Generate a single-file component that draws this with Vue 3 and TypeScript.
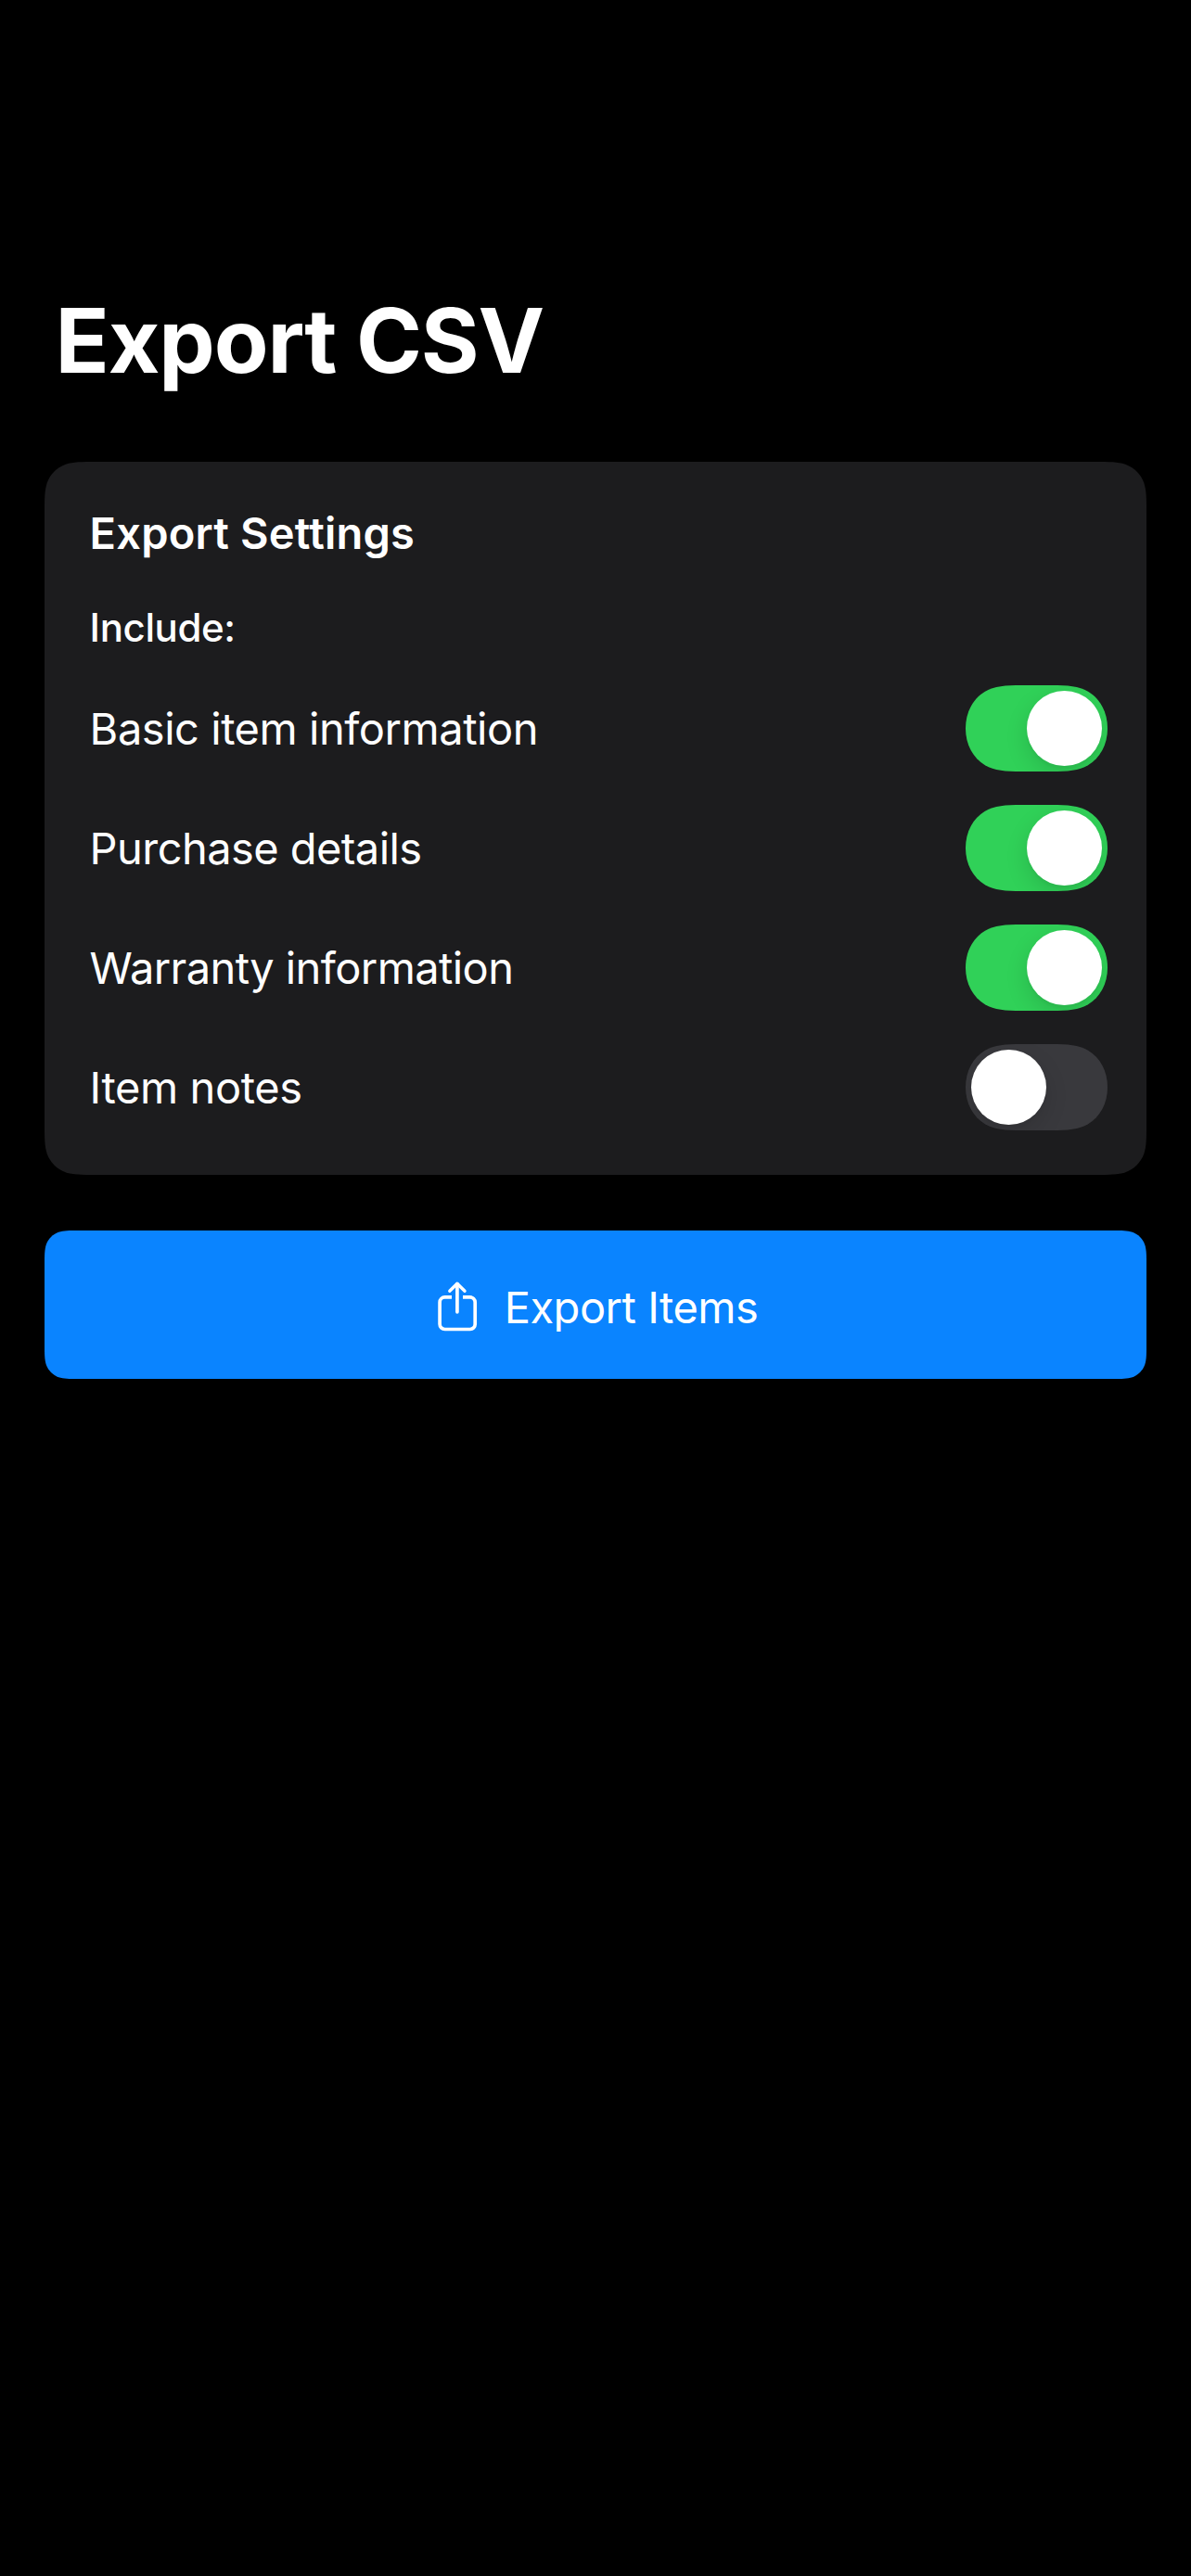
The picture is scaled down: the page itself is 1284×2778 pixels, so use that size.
<script setup lang="ts">
import { reactive } from 'vue'

interface Option {
  label: string
  enabled: boolean
  tracking: string
}

const options = reactive<Option[]>([
  { label: 'Basic item information', enabled: true, tracking: 'wide' },
  { label: 'Purchase details', enabled: true, tracking: 'normal' },
  { label: 'Warranty information', enabled: true, tracking: 'tight' },
  { label: 'Item notes', enabled: false, tracking: 'loose' },
])

// Rounded rectangle whose corners ease continuously into the straight edges.
function smoothRect(w: number, h: number, r: number): string {
  const k = [1.528665, 1.088492963, 0.868406944, 0.631493778, 0.372823826, 0.169059759, 0.074911382].map((n) => n * r)
  const [a, b, c, d, e, f, g] = k
  return (
    `M${a} 0 L${w - a} 0 C${w - b} 0 ${w - c} 0 ${w - d} ${g} C${w - e} ${f} ${w - f} ${e} ${w - g} ${d} C${w} ${c} ${w} ${b} ${w} ${a} ` +
    `L${w} ${h - a} C${w} ${h - b} ${w} ${h - c} ${w - g} ${h - d} C${w - f} ${h - e} ${w - e} ${h - f} ${w - d} ${h - g} C${w - c} ${h} ${w - b} ${h} ${w - a} ${h} ` +
    `L${a} ${h} C${b} ${h} ${c} ${h} ${d} ${h - g} C${e} ${h - f} ${f} ${h - e} ${g} ${h - d} C0 ${h - c} 0 ${h - b} 0 ${h - a} ` +
    `L0 ${a} C0 ${b} 0 ${c} ${g} ${d} C${f} ${e} ${e} ${f} ${d} ${g} C${c} 0 ${b} 0 ${a} 0 Z`
  )
}

const cardShape = `path("${smoothRect(1188, 769, 36)}")`
const buttonShape = `path("${smoothRect(1188, 160, 24)}")`
</script>

<template>
  <main class="screen">
    <h1 class="title">Export CSV</h1>

    <section class="card" :style="{ clipPath: cardShape }">
      <h2 class="heading">Export Settings</h2>
      <p class="include">Include:</p>
      <div class="options">
        <div v-for="option in options" :key="option.label" class="row">
          <span class="label" :class="option.tracking">{{ option.label }}</span>
          <button
            class="switch"
            :class="{ on: option.enabled }"
            role="switch"
            :aria-checked="option.enabled"
            :aria-label="option.label"
            @click="option.enabled = !option.enabled"
          >
            <span class="knob"></span>
          </button>
        </div>
      </div>
    </section>

    <button class="export" :style="{ clipPath: buttonShape }">
      <svg class="share" viewBox="0 0 44 56" fill="none" stroke="#fff" stroke-width="3.7" stroke-linecap="round" stroke-linejoin="round">
        <path stroke-linecap="butt" d="M16 17.9H8.6A5.5 5.5 0 0 0 3.1 23.4V47A5.5 5.5 0 0 0 8.6 52.5H35.7A5.5 5.5 0 0 0 41.2 47V23.4A5.5 5.5 0 0 0 35.7 17.9H28" />
        <path d="M21.9 3.6V33.8" />
        <path stroke-width="3.4" d="M13.8 11.2L21.9 3.2L30 11.2" />
      </svg>
      <span>Export Items</span>
    </button>
  </main>
</template>

<style>
body {
  background: #000;
}
</style>

<style scoped>
.screen {
  box-sizing: border-box;
  width: 1284px;
  min-height: 2778px;
  padding: 307px 48px 0;
  background: #000;
  color: #fff;
  font-family: Inter, 'Liberation Sans', sans-serif;
}

.title {
  margin: 0 0 71px;
  padding-left: 11.5px;
  font-size: 96px;
  line-height: 120px;
  font-weight: 700;
  letter-spacing: -1.12px;
}

.card {
  box-sizing: border-box;
  height: 769px;
  padding: 47px 42px 48px 48.6px;
  background: #1c1c1e;
}

.heading {
  margin: 0 0 47px;
  font-size: 47px;
  line-height: 60px;
  font-weight: 600;
  letter-spacing: 0.2px;
}

.include {
  margin: 0 0 37px;
  font-size: 42px;
  line-height: 50px;
  font-weight: 500;
  letter-spacing: -0.38px;
}

.options {
  display: flex;
  flex-direction: column;
  gap: 36px;
}

.row {
  display: flex;
  align-items: center;
  justify-content: space-between;
  height: 93px;
}

.label {
  font-size: 47px;
  line-height: 57px;
}

.wide {
  letter-spacing: -0.46px;
}

.normal {
  letter-spacing: -0.56px;
}

.tight {
  letter-spacing: -0.59px;
}

.loose {
  letter-spacing: -0.4px;
}

.switch {
  display: flex;
  box-sizing: border-box;
  width: 153px;
  height: 93px;
  padding: 6px;
  border: 0;
  background: #39393d;
  clip-path: path('M0 46.5C0 29 8 14.5 21 6.8C31 1 43 0 60 0H93C110 0 122 1 132 6.8C145 14.5 153 29 153 46.5C153 64 145 78.5 132 86.2C122 92 110 93 93 93H60C43 93 31 92 21 86.2C8 78.5 0 64 0 46.5Z');
}

.switch.on {
  justify-content: flex-end;
  background: #30d158;
}

.knob {
  width: 81px;
  height: 81px;
  border-radius: 50%;
  background: #fff;
  box-shadow: 0 9px 24px rgba(0, 0, 0, 0.13), 0 3px 3px rgba(0, 0, 0, 0.03);
}

.export {
  display: flex;
  box-sizing: border-box;
  align-items: center;
  justify-content: center;
  gap: 29px;
  width: 100%;
  height: 160px;
  margin-top: 60px;
  padding: 6px 0 0 4px;
  border: 0;
  background: #0a84ff;
  color: #fff;
  font-family: inherit;
  font-size: 47px;
  line-height: 58px;
  letter-spacing: -0.49px;
}

.share {
  width: 44px;
  height: 56px;
  margin-top: -2px;
}
</style>
